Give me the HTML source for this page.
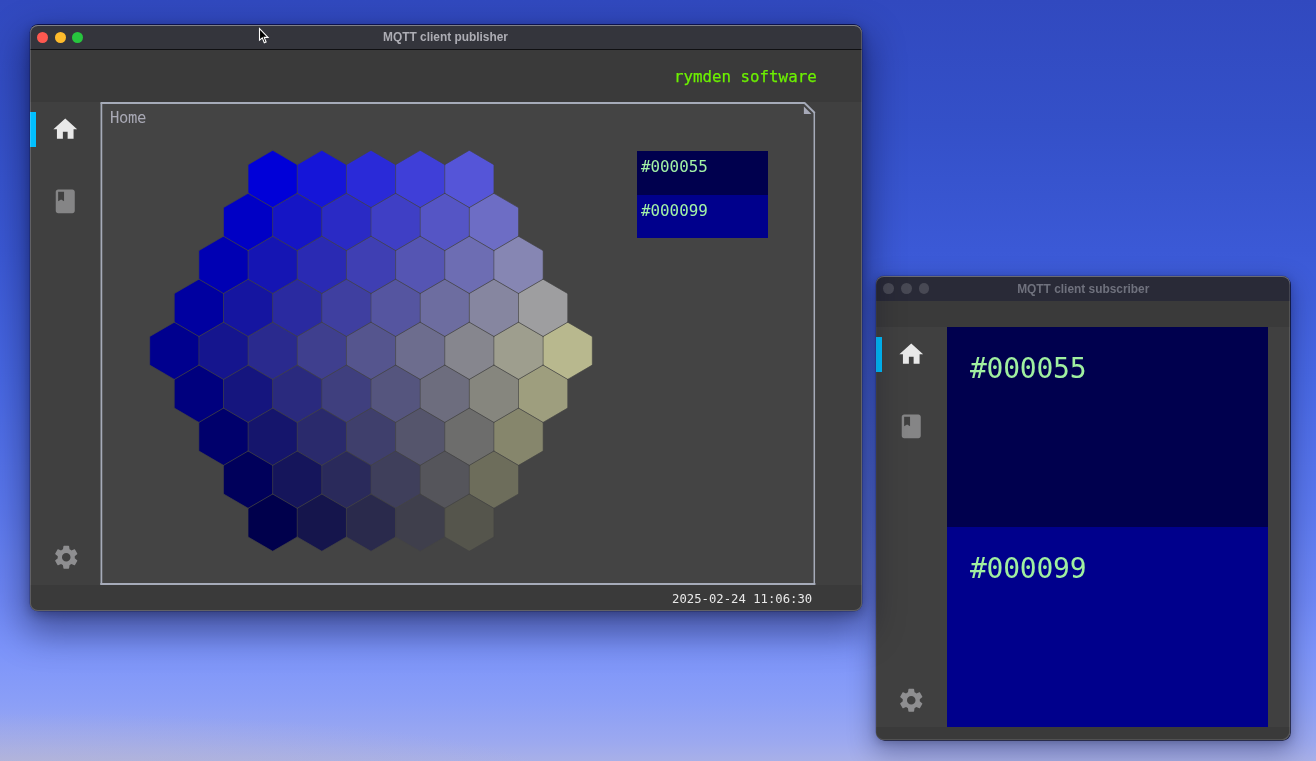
<!DOCTYPE html>
<html lang="en">
<head>
<meta charset="utf-8">
<title>MQTT client</title>
<style>
*{box-sizing:border-box;margin:0;padding:0}
html,body{width:1316px;height:761px;overflow:hidden}
body{position:relative;font-family:"Liberation Sans",sans-serif;
 background:
  radial-gradient(ellipse 520px 62px at 30px 775px, rgba(188,184,204,.62), rgba(188,184,204,0) 100%),
  linear-gradient(180deg,#3149bf 0px,#3450c8 125px,#3b59d6 250px,#4868e4 380px,#5b78ee 508px,#6e87f5 600px,#7c94fa 650px,#8a9ef7 700px,#9ba8f0 740px,#a8b0e8 761px);}
.win{position:absolute;overflow:hidden;background:#3a3a3a;border-radius:8px}
.shadow{position:absolute;border-radius:8px;
 box-shadow:0 -.8px 0 0 rgba(0,0,40,.85),0 0 0 .5px rgba(0,0,30,.35),0 16px 36px 6px rgba(0,0,30,.42),0 3px 12px rgba(0,0,30,.3);}
.ring{position:absolute;border-radius:8px;pointer-events:none}
.pg{position:absolute;width:1316px;height:761px}
.pg>div,.pg>span{position:absolute}
.tt{text-align:center;font-weight:bold;font-size:11.9px;white-space:nowrap;will-change:transform}
.tl{width:11px;height:11px;border-radius:50%}
.mono{font-family:"DejaVu Sans Mono","Liberation Mono",monospace;white-space:nowrap;will-change:transform}
svg{position:absolute;overflow:visible}
</style>
</head>
<body>

<!-- ============ subscriber window ============ -->
<div class="shadow" style="box-shadow:0 0 0 .5px rgba(0,0,30,.25),.8px .7px 0 0 rgba(0,0,10,.7),0 10px 26px 3px rgba(0,0,30,.3),0 2px 8px rgba(0,0,30,.22);left:876.3px;top:276px;width:413.6px;height:464px"></div>
<div class="win" style="left:876.3px;top:276px;width:413.6px;height:464px">
 <div class="pg" style="left:-876.3px;top:-276px">
  <div style="left:876px;top:276px;width:416px;height:25.4px;background:#292a37"></div>
  <div style="left:876px;top:300.5px;width:416px;height:.9px;background:#22232d"></div>
  <div class="tt" style="left:876px;top:281.5px;width:414.5px;line-height:14px;color:#6f717d">MQTT client subscriber</div>
  <span class="tl" style="left:883.2px;top:283px;width:10.8px;height:10.8px;background:#484954"></span>
  <span class="tl" style="left:900.8px;top:283px;width:10.8px;height:10.8px;background:#484954"></span>
  <span class="tl" style="left:918.5px;top:283px;width:10.8px;height:10.8px;background:#484954"></span>
  <div style="left:876px;top:301.4px;width:416px;height:26px;background:#3a3a3a"></div>
  <div style="left:876px;top:327px;width:416px;height:400px;background:#404040"></div>
  <div style="left:876px;top:337px;width:6.2px;height:35px;background:#00bfff"></div>
  <svg style="left:897.2px;top:340px" width="28.5" height="28.5" viewBox="0 0 24 24"><path fill="#e9e9e9" d="M10 20v-6h4v6h5v-8h3L12 3 2 12h3v8z"/></svg>
  <svg style="left:897.2px;top:412px" width="28.5" height="28.5" viewBox="0 0 24 24"><path fill="#858586" d="M18 2H6c-1.1 0-2 .9-2 2v16c0 1.1.9 2 2 2h12c1.1 0 2-.9 2-2V4c0-1.1-.9-2-2-2zM6 4h5v8l-2.500-1.500L6 12V4z"/></svg>
  <svg style="left:897.4px;top:685.6px" width="28.5" height="28.5" viewBox="0 0 24 24"><path fill="#8e8e90" d="M19.140 12.940c.040-.300.060-.610.060-.940 0-.320-.020-.640-.070-.940l2.030-1.580c.180-.140.230-.410.120-.610l-1.920-3.320c-.120-.220-.370-.290-.590-.220l-2.390.960c-.500-.380-1.030-.700-1.620-.940l-.360-2.540c-.040-.240-.240-.410-.480-.410h-3.840c-.240 0-.430.170-.470.410l-.360 2.540c-.590.240-1.130.570-1.620.940l-2.390-.960c-.220-.080-.470 0-.590.220L2.740 8.870c-.120.210-.080.470.120.610l2.030 1.580c-.050.300-.090.630-.090.940s.020.640.070.940l-2.030 1.580c-.180.140-.230.410-.120.610l1.920 3.320c.120.220.370.290.590.220l2.390-.960c.500.380 1.030.700 1.620.940l.360 2.540c.050.240.240.410.480.410h3.840c.240 0 .440-.170.470-.410l.360-2.540c.590-.240 1.130-.560 1.620-.940l2.390.960c.220.080.470 0 .590-.220l1.920-3.320c.120-.220.070-.470-.120-.610l-2.010-1.580zM12 15.600c-1.980 0-3.600-1.620-3.600-3.600s1.620-3.600 3.600-3.600 3.600 1.620 3.600 3.600-1.620 3.600-3.600 3.600z"/></svg>
  <div style="left:947px;top:327px;width:321.2px;height:200px;background:#00004e"></div>
  <div style="left:947px;top:527px;width:321.2px;height:199.9px;background:#00008c"></div>
  <div class="mono" style="left:969.7px;top:350.8px;font-size:28px;letter-spacing:-0.25px;line-height:36px;color:#a0f0a0">#000055</div>
  <div class="mono" style="left:969.7px;top:550.8px;font-size:28px;letter-spacing:-0.25px;line-height:36px;color:#a0f0a0">#000099</div>
  <div style="left:876px;top:726.9px;width:416px;height:15px;background:#3a3a3a"></div>
 </div>
</div>
<div class="ring" style="left:876.3px;top:276px;width:413.6px;height:464px;box-shadow:inset 0 .9px 0 0 rgba(255,255,255,.28),inset 0 0 0 .8px rgba(255,255,255,.05),inset -.8px -.8px 0 0 rgba(255,255,255,.12)"></div>

<!-- ============ publisher window ============ -->
<div class="shadow" style="left:30.2px;top:25px;width:831.5px;height:586.2px"></div>
<div class="win" style="left:30.2px;top:25px;width:831.5px;height:586.2px">
 <div class="pg" style="left:-30.2px;top:-25px">
  <!-- title bar -->
  <div style="left:30px;top:25px;width:832px;height:24.2px;background:#34353c"></div>
  <div style="left:30px;top:48.6px;width:832px;height:1.1px;background:#101012"></div>
  <div class="tt" style="left:30px;top:29.5px;width:831px;line-height:14px;color:#adadb4">MQTT client publisher</div>
  <span class="tl" style="left:37.3px;top:31.7px;background:#fe5850"></span>
  <span class="tl" style="left:54.8px;top:31.7px;background:#febb2c"></span>
  <span class="tl" style="left:72.3px;top:31.7px;background:#27c53e"></span>
  <!-- header -->
  <div style="left:30px;top:49.7px;width:832px;height:52.3px;background:#3a3a3a"></div>
  <div class="mono" style="left:674.3px;top:66.7px;font-size:15.8px;line-height:20px;color:#6cf000;-webkit-text-stroke:.25px #6cf000">rymden software</div>
  <!-- body row -->
  <div style="left:30px;top:102px;width:832px;height:483.2px;background:#404040"></div>
  <!-- sidebar -->
  <div style="left:30px;top:112px;width:6.2px;height:34.5px;background:#00bfff"></div>
  <svg style="left:51.3px;top:115px" width="28.5" height="28.5" viewBox="0 0 24 24"><path fill="#e9e9e9" d="M10 20v-6h4v6h5v-8h3L12 3 2 12h3v8z"/></svg>
  <svg style="left:51.3px;top:187.1px" width="28.5" height="28.5" viewBox="0 0 24 24"><path fill="#858586" d="M18 2H6c-1.1 0-2 .9-2 2v16c0 1.1.9 2 2 2h12c1.1 0 2-.9 2-2V4c0-1.1-.9-2-2-2zM6 4h5v8l-2.500-1.500L6 12V4z"/></svg>
  <svg style="left:51.6px;top:543px" width="28.5" height="28.5" viewBox="0 0 24 24"><path fill="#8e8e90" d="M19.140 12.940c.040-.300.060-.610.060-.940 0-.320-.020-.640-.070-.940l2.030-1.580c.180-.140.230-.410.120-.610l-1.920-3.320c-.120-.220-.370-.290-.590-.220l-2.390.960c-.500-.380-1.030-.700-1.620-.940l-.360-2.540c-.040-.240-.240-.410-.480-.410h-3.840c-.240 0-.430.170-.470.410l-.360 2.540c-.590.240-1.130.570-1.620.940l-2.390-.960c-.220-.080-.470 0-.590.220L2.740 8.870c-.120.210-.080.470.120.610l2.030 1.580c-.050.300-.090.630-.090.940s.020.640.070.940l-2.030 1.580c-.180.140-.230.410-.120.610l1.920 3.320c.120.220.370.290.590.220l2.390-.960c.500.380 1.030.700 1.620.940l.360 2.540c.050.240.240.410.480.410h3.840c.240 0 .440-.170.470-.410l.360-2.540c.590-.240 1.130-.560 1.620-.940l2.390.960c.220.080.470 0 .590-.220l1.920-3.320c.120-.220.070-.470-.120-.610l-2.010-1.580zM12 15.600c-1.980 0-3.600-1.620-3.600-3.600s1.620-3.600 3.600-3.600 3.600 1.620 3.600 3.600-1.620 3.600-3.600 3.600z"/></svg>
  <!-- main frame -->
  <svg style="left:0;top:0" width="1316" height="761" viewBox="0 0 1316 761">
    <polygon points="101.4,103 804.6,103 814.4,112.4 814.4,584.2 101.4,584.2" fill="#444444"/>
    <g fill="none" stroke="#a6abb9" stroke-linecap="square">
      <path d="M100.55 103.05H804.7" stroke-width="2.1" stroke-linecap="butt"/>
      <path d="M101.4 584V103.6" stroke-width="1.7"/>
      <path d="M101.4 584H814.3" stroke-width="2.2"/>
      <path d="M814.3 584V113" stroke-width="1.5"/>
      <path d="M804.6 103.05L814.3 112.5" stroke-width="1.9" stroke-linecap="round"/>
    </g>
    <polygon points="803.9,106.6 803.9,114.1 811.4,114.1" fill="#a7a9b8"/>
    <g stroke="none">
<polygon points="272.66,150.32 297.24,164.64 297.24,193.28 272.66,207.60 248.07,193.28 248.07,164.64" fill="rgb(0,0,216)"/>
<polygon points="321.83,150.32 346.41,164.64 346.41,193.28 321.83,207.60 297.25,193.28 297.25,164.64" fill="rgb(21,21,216)"/>
<polygon points="371.00,150.32 395.58,164.64 395.58,193.28 371.00,207.60 346.42,193.28 346.42,164.64" fill="rgb(42,42,216)"/>
<polygon points="420.17,150.32 444.75,164.64 444.75,193.28 420.17,207.60 395.58,193.28 395.58,164.64" fill="rgb(63,63,216)"/>
<polygon points="469.34,150.32 493.92,164.64 493.92,193.28 469.34,207.60 444.75,193.28 444.75,164.64" fill="rgb(85,85,216)"/>
<polygon points="248.07,193.28 272.66,207.60 272.66,236.24 248.07,250.56 223.49,236.24 223.49,207.60" fill="rgb(0,0,197)"/>
<polygon points="297.25,193.28 321.83,207.60 321.83,236.24 297.25,250.56 272.66,236.24 272.66,207.60" fill="rgb(21,21,197)"/>
<polygon points="346.41,193.28 371.00,207.60 371.00,236.24 346.41,250.56 321.83,236.24 321.83,207.60" fill="rgb(42,42,197)"/>
<polygon points="395.58,193.28 420.17,207.60 420.17,236.24 395.58,250.56 371.00,236.24 371.00,207.60" fill="rgb(63,63,197)"/>
<polygon points="444.75,193.28 469.34,207.60 469.34,236.24 444.75,250.56 420.17,236.24 420.17,207.60" fill="rgb(85,85,197)"/>
<polygon points="493.93,193.28 518.51,207.60 518.51,236.24 493.93,250.56 469.34,236.24 469.34,207.60" fill="rgb(109,109,197)"/>
<polygon points="223.49,236.24 248.08,250.56 248.08,279.20 223.49,293.52 198.91,279.20 198.91,250.56" fill="rgb(0,0,179)"/>
<polygon points="272.66,236.24 297.25,250.56 297.25,279.20 272.66,293.52 248.08,279.20 248.08,250.56" fill="rgb(21,21,179)"/>
<polygon points="321.83,236.24 346.42,250.56 346.42,279.20 321.83,293.52 297.25,279.20 297.25,250.56" fill="rgb(42,42,179)"/>
<polygon points="371.00,236.24 395.58,250.56 395.58,279.20 371.00,293.52 346.42,279.20 346.42,250.56" fill="rgb(63,63,179)"/>
<polygon points="420.17,236.24 444.75,250.56 444.75,279.20 420.17,293.52 395.59,279.20 395.59,250.56" fill="rgb(85,85,179)"/>
<polygon points="469.34,236.24 493.93,250.56 493.93,279.20 469.34,293.52 444.76,279.20 444.76,250.56" fill="rgb(109,109,179)"/>
<polygon points="518.51,236.24 543.10,250.56 543.10,279.20 518.51,293.52 493.93,279.20 493.93,250.56" fill="rgb(134,134,179)"/>
<polygon points="198.91,279.20 223.49,293.52 223.49,322.16 198.91,336.48 174.32,322.16 174.32,293.52" fill="rgb(0,0,160)"/>
<polygon points="248.07,279.20 272.66,293.52 272.66,322.16 248.07,336.48 223.49,322.16 223.49,293.52" fill="rgb(21,21,160)"/>
<polygon points="297.25,279.20 321.83,293.52 321.83,322.16 297.25,336.48 272.66,322.16 272.66,293.52" fill="rgb(42,42,160)"/>
<polygon points="346.41,279.20 371.00,293.52 371.00,322.16 346.41,336.48 321.83,322.16 321.83,293.52" fill="rgb(63,63,160)"/>
<polygon points="395.59,279.20 420.17,293.52 420.17,322.16 395.59,336.48 371.00,322.16 371.00,293.52" fill="rgb(85,85,160)"/>
<polygon points="444.75,279.20 469.34,293.52 469.34,322.16 444.75,336.48 420.17,322.16 420.17,293.52" fill="rgb(109,109,160)"/>
<polygon points="493.92,279.20 518.51,293.52 518.51,322.16 493.92,336.48 469.34,322.16 469.34,293.52" fill="rgb(134,134,160)"/>
<polygon points="543.10,279.20 567.68,293.52 567.68,322.16 543.10,336.48 518.51,322.16 518.51,293.52" fill="rgb(158,158,160)"/>
<polygon points="174.32,322.16 198.91,336.48 198.91,365.12 174.32,379.44 149.73,365.12 149.73,336.48" fill="rgb(0,0,142)"/>
<polygon points="223.49,322.16 248.08,336.48 248.08,365.12 223.49,379.44 198.91,365.12 198.91,336.48" fill="rgb(21,21,142)"/>
<polygon points="272.66,322.16 297.24,336.48 297.24,365.12 272.66,379.44 248.07,365.12 248.07,336.48" fill="rgb(42,42,142)"/>
<polygon points="321.83,322.16 346.41,336.48 346.41,365.12 321.83,379.44 297.25,365.12 297.25,336.48" fill="rgb(63,63,142)"/>
<polygon points="371.00,322.16 395.58,336.48 395.58,365.12 371.00,379.44 346.42,365.12 346.42,336.48" fill="rgb(85,85,142)"/>
<polygon points="420.17,322.16 444.75,336.48 444.75,365.12 420.17,379.44 395.59,365.12 395.59,336.48" fill="rgb(109,109,142)"/>
<polygon points="469.34,322.16 493.92,336.48 493.92,365.12 469.34,379.44 444.75,365.12 444.75,336.48" fill="rgb(134,134,142)"/>
<polygon points="518.51,322.16 543.10,336.48 543.10,365.12 518.51,379.44 493.93,365.12 493.93,336.48" fill="rgb(158,158,142)"/>
<polygon points="567.68,322.16 592.27,336.48 592.27,365.12 567.68,379.44 543.10,365.12 543.10,336.48" fill="rgb(184,184,142)"/>
<polygon points="198.91,365.12 223.49,379.44 223.49,408.08 198.91,422.40 174.32,408.08 174.32,379.44" fill="rgb(0,0,126)"/>
<polygon points="248.07,365.12 272.66,379.44 272.66,408.08 248.07,422.40 223.49,408.08 223.49,379.44" fill="rgb(21,21,126)"/>
<polygon points="297.25,365.12 321.83,379.44 321.83,408.08 297.25,422.40 272.66,408.08 272.66,379.44" fill="rgb(42,42,126)"/>
<polygon points="346.41,365.12 371.00,379.44 371.00,408.08 346.41,422.40 321.83,408.08 321.83,379.44" fill="rgb(63,63,126)"/>
<polygon points="395.59,365.12 420.17,379.44 420.17,408.08 395.59,422.40 371.00,408.08 371.00,379.44" fill="rgb(85,85,126)"/>
<polygon points="444.75,365.12 469.34,379.44 469.34,408.08 444.75,422.40 420.17,408.08 420.17,379.44" fill="rgb(109,109,126)"/>
<polygon points="493.92,365.12 518.51,379.44 518.51,408.08 493.92,422.40 469.34,408.08 469.34,379.44" fill="rgb(134,134,126)"/>
<polygon points="543.10,365.12 567.68,379.44 567.68,408.08 543.10,422.40 518.51,408.08 518.51,379.44" fill="rgb(158,158,126)"/>
<polygon points="223.49,408.08 248.08,422.40 248.08,451.04 223.49,465.36 198.91,451.04 198.91,422.40" fill="rgb(0,0,108)"/>
<polygon points="272.66,408.08 297.25,422.40 297.25,451.04 272.66,465.36 248.08,451.04 248.08,422.40" fill="rgb(21,21,108)"/>
<polygon points="321.83,408.08 346.42,422.40 346.42,451.04 321.83,465.36 297.25,451.04 297.25,422.40" fill="rgb(42,42,108)"/>
<polygon points="371.00,408.08 395.58,422.40 395.58,451.04 371.00,465.36 346.42,451.04 346.42,422.40" fill="rgb(63,63,108)"/>
<polygon points="420.17,408.08 444.75,422.40 444.75,451.04 420.17,465.36 395.59,451.04 395.59,422.40" fill="rgb(85,85,108)"/>
<polygon points="469.34,408.08 493.93,422.40 493.93,451.04 469.34,465.36 444.76,451.04 444.76,422.40" fill="rgb(109,109,108)"/>
<polygon points="518.51,408.08 543.10,422.40 543.10,451.04 518.51,465.36 493.93,451.04 493.93,422.40" fill="rgb(134,134,108)"/>
<polygon points="248.07,451.04 272.66,465.36 272.66,494.00 248.07,508.32 223.49,494.00 223.49,465.36" fill="rgb(0,0,91)"/>
<polygon points="297.25,451.04 321.83,465.36 321.83,494.00 297.25,508.32 272.66,494.00 272.66,465.36" fill="rgb(21,21,91)"/>
<polygon points="346.41,451.04 371.00,465.36 371.00,494.00 346.41,508.32 321.83,494.00 321.83,465.36" fill="rgb(42,42,91)"/>
<polygon points="395.58,451.04 420.17,465.36 420.17,494.00 395.58,508.32 371.00,494.00 371.00,465.36" fill="rgb(63,63,91)"/>
<polygon points="444.75,451.04 469.34,465.36 469.34,494.00 444.75,508.32 420.17,494.00 420.17,465.36" fill="rgb(85,85,91)"/>
<polygon points="493.93,451.04 518.51,465.36 518.51,494.00 493.93,508.32 469.34,494.00 469.34,465.36" fill="rgb(109,109,91)"/>
<polygon points="272.66,494.00 297.24,508.32 297.24,536.96 272.66,551.28 248.07,536.96 248.07,508.32" fill="rgb(0,0,76)"/>
<polygon points="321.83,494.00 346.41,508.32 346.41,536.96 321.83,551.28 297.25,536.96 297.25,508.32" fill="rgb(21,21,76)"/>
<polygon points="371.00,494.00 395.58,508.32 395.58,536.96 371.00,551.28 346.42,536.96 346.42,508.32" fill="rgb(42,42,76)"/>
<polygon points="420.17,494.00 444.75,508.32 444.75,536.96 420.17,551.28 395.58,536.96 395.58,508.32" fill="rgb(63,63,76)"/>
<polygon points="469.34,494.00 493.92,508.32 493.92,536.96 469.34,551.28 444.75,536.96 444.75,508.32" fill="rgb(85,85,76)"/>
<path d="M272.7 150.3L297.2 164.6M272.7 207.6L297.2 193.3M248.1 193.3L272.7 207.6M248.1 164.6L272.7 150.3M321.8 150.3L346.4 164.6M321.8 207.6L346.4 193.3M297.2 193.3L321.8 207.6M297.2 164.6L321.8 150.3M371.0 150.3L395.6 164.6M371.0 207.6L395.6 193.3M346.4 193.3L371.0 207.6M346.4 164.6L371.0 150.3M420.2 150.3L444.8 164.6M420.2 207.6L444.8 193.3M395.6 193.3L420.2 207.6M395.6 164.6L420.2 150.3M469.3 150.3L493.9 164.6M469.3 207.6L493.9 193.3M444.8 193.3L469.3 207.6M444.8 164.6L469.3 150.3M248.1 250.6L272.7 236.2M223.5 236.2L248.1 250.6M223.5 207.6L248.1 193.3M297.2 250.6L321.8 236.2M272.7 236.2L297.2 250.6M346.4 250.6L371.0 236.2M321.8 236.2L346.4 250.6M395.6 250.6L420.2 236.2M371.0 236.2L395.6 250.6M444.8 250.6L469.3 236.2M420.2 236.2L444.8 250.6M493.9 193.3L518.5 207.6M493.9 250.6L518.5 236.2M469.3 236.2L493.9 250.6M223.5 293.5L248.1 279.2M198.9 279.2L223.5 293.5M198.9 250.6L223.5 236.2M272.7 293.5L297.2 279.2M248.1 279.2L272.7 293.5M321.8 293.5L346.4 279.2M297.2 279.2L321.8 293.5M371.0 293.5L395.6 279.2M346.4 279.2L371.0 293.5M420.2 293.5L444.8 279.2M395.6 279.2L420.2 293.5M469.3 293.5L493.9 279.2M444.8 279.2L469.3 293.5M518.5 236.2L543.1 250.6M518.5 293.5L543.1 279.2M493.9 279.2L518.5 293.5M198.9 336.5L223.5 322.2M174.3 322.2L198.9 336.5M174.3 293.5L198.9 279.2M248.1 336.5L272.7 322.2M223.5 322.2L248.1 336.5M297.2 336.5L321.8 322.2M272.7 322.2L297.2 336.5M346.4 336.5L371.0 322.2M321.8 322.2L346.4 336.5M395.6 336.5L420.2 322.2M371.0 322.2L395.6 336.5M444.8 336.5L469.3 322.2M420.2 322.2L444.8 336.5M493.9 336.5L518.5 322.2M469.3 322.2L493.9 336.5M543.1 279.2L567.7 293.5M543.1 336.5L567.7 322.2M518.5 322.2L543.1 336.5M174.3 379.4L198.9 365.1M149.7 365.1L174.3 379.4M149.7 336.5L174.3 322.2M223.5 379.4L248.1 365.1M198.9 365.1L223.5 379.4M272.7 379.4L297.2 365.1M248.1 365.1L272.7 379.4M321.8 379.4L346.4 365.1M297.2 365.1L321.8 379.4M371.0 379.4L395.6 365.1M346.4 365.1L371.0 379.4M420.2 379.4L444.8 365.1M395.6 365.1L420.2 379.4M469.3 379.4L493.9 365.1M444.8 365.1L469.3 379.4M518.5 379.4L543.1 365.1M493.9 365.1L518.5 379.4M567.7 322.2L592.3 336.5M567.7 379.4L592.3 365.1M543.1 365.1L567.7 379.4M198.9 422.4L223.5 408.1M174.3 408.1L198.9 422.4M248.1 422.4L272.7 408.1M223.5 408.1L248.1 422.4M297.2 422.4L321.8 408.1M272.7 408.1L297.2 422.4M346.4 422.4L371.0 408.1M321.8 408.1L346.4 422.4M395.6 422.4L420.2 408.1M371.0 408.1L395.6 422.4M444.8 422.4L469.3 408.1M420.2 408.1L444.8 422.4M493.9 422.4L518.5 408.1M469.3 408.1L493.9 422.4M543.1 422.4L567.7 408.1M518.5 408.1L543.1 422.4M223.5 465.4L248.1 451.0M198.9 451.0L223.5 465.4M272.7 465.4L297.2 451.0M248.1 451.0L272.7 465.4M321.8 465.4L346.4 451.0M297.2 451.0L321.8 465.4M371.0 465.4L395.6 451.0M346.4 451.0L371.0 465.4M420.2 465.4L444.8 451.0M395.6 451.0L420.2 465.4M469.3 465.4L493.9 451.0M444.8 451.0L469.3 465.4M518.5 465.4L543.1 451.0M493.9 451.0L518.5 465.4M248.1 508.3L272.7 494.0M223.5 494.0L248.1 508.3M297.2 508.3L321.8 494.0M272.7 494.0L297.2 508.3M346.4 508.3L371.0 494.0M321.8 494.0L346.4 508.3M395.6 508.3L420.2 494.0M371.0 494.0L395.6 508.3M444.8 508.3L469.3 494.0M420.2 494.0L444.8 508.3M493.9 508.3L518.5 494.0M469.3 494.0L493.9 508.3M272.7 551.3L297.2 537.0M248.1 537.0L272.7 551.3M321.8 551.3L346.4 537.0M297.2 537.0L321.8 551.3M371.0 551.3L395.6 537.0M346.4 537.0L371.0 551.3M420.2 551.3L444.8 537.0M395.6 537.0L420.2 551.3M469.3 551.3L493.9 537.0M444.8 537.0L469.3 551.3" fill="none" stroke="#444" stroke-width="0.7" stroke-linecap="round"/>
<path d="M297.2 164.6L297.2 193.3M248.1 164.6L248.1 193.3M346.4 164.6L346.4 193.3M395.6 164.6L395.6 193.3M444.8 164.6L444.8 193.3M493.9 164.6L493.9 193.3M272.7 207.6L272.7 236.2M223.5 207.6L223.5 236.2M321.8 207.6L321.8 236.2M371.0 207.6L371.0 236.2M420.2 207.6L420.2 236.2M469.3 207.6L469.3 236.2M518.5 207.6L518.5 236.2M248.1 250.6L248.1 279.2M198.9 250.6L198.9 279.2M297.2 250.6L297.2 279.2M346.4 250.6L346.4 279.2M395.6 250.6L395.6 279.2M444.8 250.6L444.8 279.2M493.9 250.6L493.9 279.2M543.1 250.6L543.1 279.2M223.5 293.5L223.5 322.2M174.3 293.5L174.3 322.2M272.7 293.5L272.7 322.2M321.8 293.5L321.8 322.2M371.0 293.5L371.0 322.2M420.2 293.5L420.2 322.2M469.3 293.5L469.3 322.2M518.5 293.5L518.5 322.2M567.7 293.5L567.7 322.2M198.9 336.5L198.9 365.1M149.7 336.5L149.7 365.1M248.1 336.5L248.1 365.1M297.2 336.5L297.2 365.1M346.4 336.5L346.4 365.1M395.6 336.5L395.6 365.1M444.8 336.5L444.8 365.1M493.9 336.5L493.9 365.1M543.1 336.5L543.1 365.1M592.3 336.5L592.3 365.1M223.5 379.4L223.5 408.1M174.3 379.4L174.3 408.1M272.7 379.4L272.7 408.1M321.8 379.4L321.8 408.1M371.0 379.4L371.0 408.1M420.2 379.4L420.2 408.1M469.3 379.4L469.3 408.1M518.5 379.4L518.5 408.1M567.7 379.4L567.7 408.1M248.1 422.4L248.1 451.0M198.9 422.4L198.9 451.0M297.2 422.4L297.2 451.0M346.4 422.4L346.4 451.0M395.6 422.4L395.6 451.0M444.8 422.4L444.8 451.0M493.9 422.4L493.9 451.0M543.1 422.4L543.1 451.0M272.7 465.4L272.7 494.0M223.5 465.4L223.5 494.0M321.8 465.4L321.8 494.0M371.0 465.4L371.0 494.0M420.2 465.4L420.2 494.0M469.3 465.4L469.3 494.0M518.5 465.4L518.5 494.0M297.2 508.3L297.2 537.0M248.1 508.3L248.1 537.0M346.4 508.3L346.4 537.0M395.6 508.3L395.6 537.0M444.8 508.3L444.8 537.0M493.9 508.3L493.9 537.0" fill="none" stroke="#444" stroke-width="0.55" stroke-linecap="round"/>
    </g>
  </svg>
  <div class="mono" style="left:110px;top:108px;font-size:15.5px;letter-spacing:-0.3px;line-height:20px;color:#a8a8b4">Home</div>
  <!-- list -->
  <div style="left:636.8px;top:150.5px;width:131.3px;height:44px;background:#00004e"></div>
  <div style="left:636.8px;top:194.5px;width:131.3px;height:43.8px;background:#00008c"></div>
  <div class="mono" style="left:640.6px;top:156.6px;font-size:15.85px;line-height:20px;color:#a3f2a6">#000055</div>
  <div class="mono" style="left:640.6px;top:200.6px;font-size:15.85px;line-height:20px;color:#a3f2a6">#000099</div>
  <!-- footer -->
  <div style="left:30px;top:585.2px;width:832px;height:27px;background:#3a3a3a"></div>
  <div class="mono" style="left:671.6px;top:591.3px;font-size:12.25px;line-height:16px;color:#e8e8e8">2025-02-24 11:06:30</div>
 </div>
</div>
<div class="ring" style="left:30.2px;top:25px;width:831.5px;height:586.2px;box-shadow:inset 0 .9px 0 0 rgba(255,255,255,.22),inset 0 0 0 .9px rgba(235,235,255,.22)"></div>

<!-- mouse cursor -->
<svg style="left:250px;top:22px" width="30" height="30" viewBox="0 0 30 30"><path d="M9.500 6.600 L9.500 18.200 L12.300 15.900 L14.300 20.800 L16.100 20 L14.200 15.400 L18 15.400 Z" fill="#000" stroke="#fff" stroke-width="1.1" stroke-linejoin="miter"/></svg>

</body>
</html>
